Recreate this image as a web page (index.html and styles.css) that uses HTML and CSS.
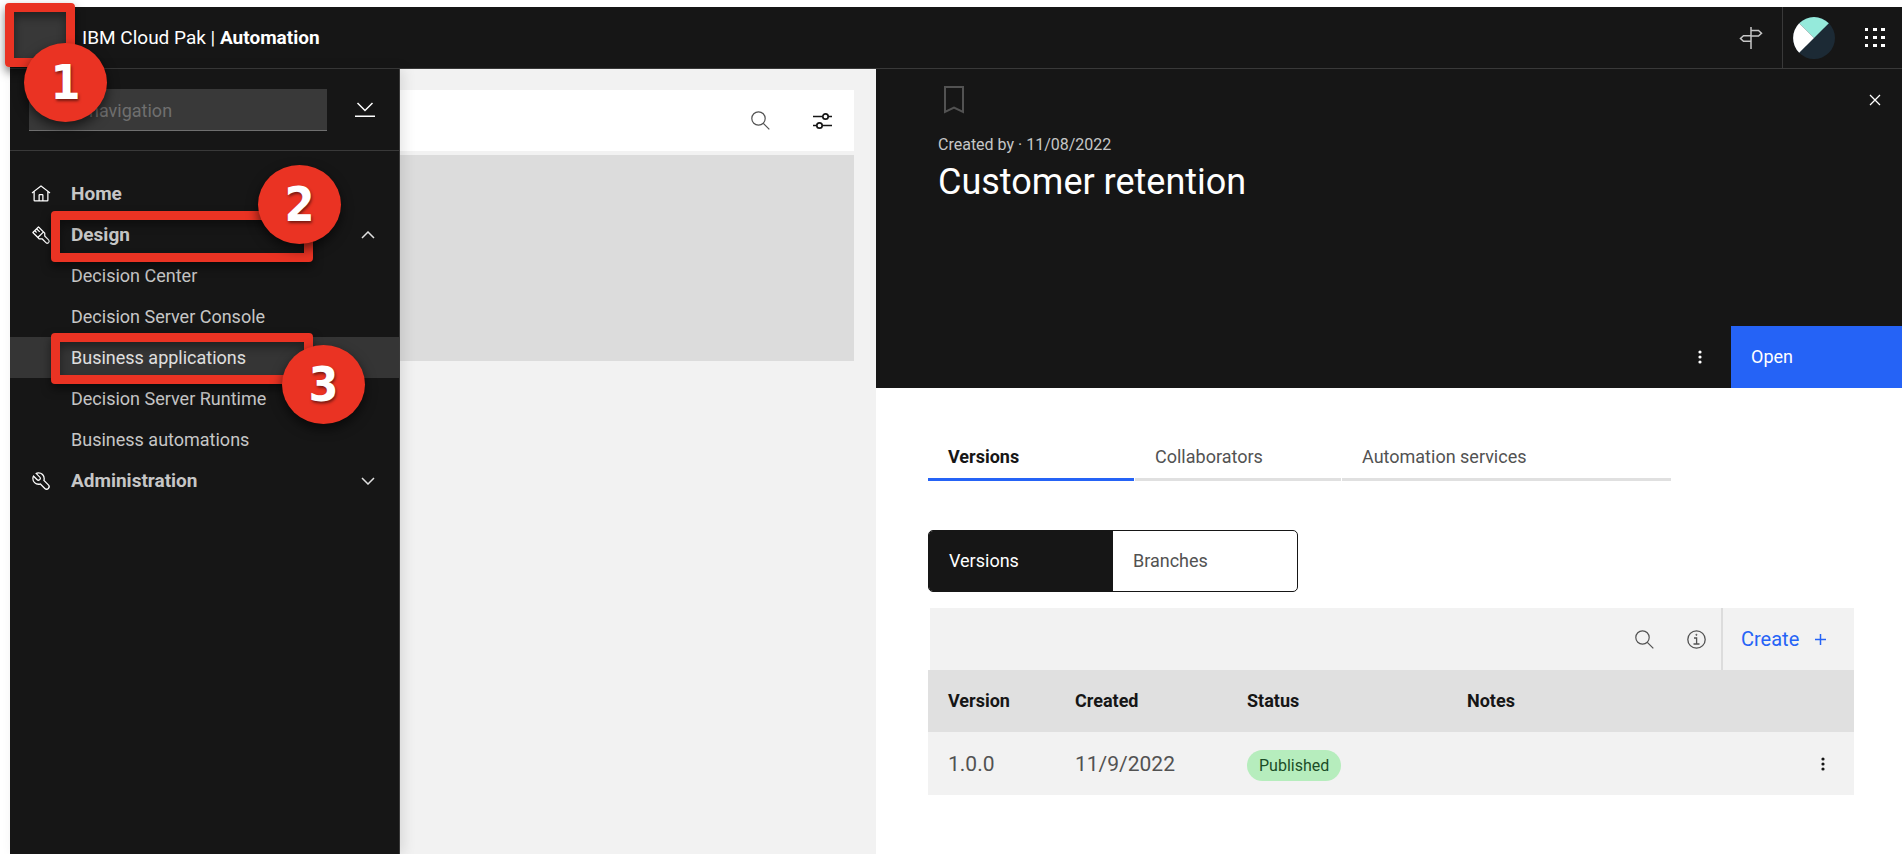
FILE: index.html
```html
<!DOCTYPE html>
<html lang="en">
<head>
<meta charset="utf-8">
<title>IBM Cloud Pak | Automation</title>
<link rel="stylesheet" href="styles.css">
</head>
<body>
<div class="page">
  <header class="topbar">
    <button class="menu-button" aria-label="Menu"></button>
    <div class="brand">IBM Cloud Pak | <strong>Automation</strong></div>
    <div class="topbar-tools">
      <button class="icon-button tool-guide" aria-label="Guide">
        <svg width="24" height="24" viewBox="0 0 24 24" fill="none" stroke="#c6c6c6" stroke-width="1.5"><path d="M12 1v22M12 4.500h7.500l3 2.700-3 2.800H12M12 9.800H4.500l-3 2.700 3 2.700H12"/></svg>
      </button>
      <button class="icon-button tool-avatar" aria-label="Account">
        <svg width="42" height="42" viewBox="0 0 42 42"><circle cx="21" cy="21" r="21" fill="#1c2a35"/><path d="M21 21 6.200 6.200A21 21 0 0 1 35.800 6.200z" fill="#95eadb"/><path d="M21 21 6.200 6.200A21 21 0 0 0 6.200 35.800z" fill="#fff"/></svg>
      </button>
      <button class="icon-button tool-apps" aria-label="Switcher">
        <svg width="20" height="20" viewBox="0 0 20 20" fill="#fff"><path d="M0 0h3v3H0zM8 0h4v3H8zM16 0h4v3h-4zM0 8h3v3H0zM8 8h4v3H8zM16 8h4v3h-4zM0 16h3v3H0zM8 16h4v3H8zM16 16h4v3h-4z"/></svg>
      </button>
    </div>
  </header>

  <div class="columns">
    <nav class="sidebar" aria-label="Main">
      <div class="nav-search">
        <input class="nav-input" type="text" placeholder="navigation" aria-label="Navigation">
        <button class="icon-button" aria-label="Expand all">
          <svg width="20" height="16" viewBox="0 0 20 16" fill="none" stroke="#fff" stroke-width="1.500"><path d="M2.500 1l7.500 7.500L17.500 1M0 14.200h20"/></svg>
        </button>
      </div>
      <ul class="nav-list">
        <li><a class="nav-item nav-group" href="#">
          <svg class="nav-icon" viewBox="0 0 32 32" fill="#fff"><path d="M16.600 2.200a1 1 0 0 0-1.200 0L1 13.400 2.200 15 4 13.600V26a2 2 0 0 0 2 2h20a2 2 0 0 0 2-2V13.600L29.800 15 31 13.400zM18 26h-4v-8h4zm2 0v-8a2 2 0 0 0-2-2h-4a2 2 0 0 0-2 2v8H6V12.100L16 4.300l10 7.800V26z"/></svg>
          <span>Home</span></a></li>
        <li><a class="nav-item nav-group" href="#">
          <svg class="nav-icon" viewBox="0 0 32 32" fill="#fff"><path d="M28.830 23.170 23 17.330V13a1 1 0 0 0-.29-.71l-10-10a1 1 0 0 0-1.420 0l-9 9a1 1 0 0 0 0 1.420l10 10A1 1 0 0 0 13 23h4.340l5.830 5.840a4 4 0 0 0 5.660-5.660zM6 10.410l2.290 2.300 1.420-1.420L7.410 9 9 7.410l4.290 4.300 1.420-1.420L10.410 6 12 4.410 18.590 11 11 18.590 4.410 12zM27.410 27.410a2 2 0 0 1-2.820 0l-6.130-6.120a1 1 0 0 0-.7-.29h-4.350l-1-1L20 12.410l1 1v4.340a1 1 0 0 0 .29.7l6.120 6.130a2 2 0 0 1 0 2.830z"/></svg>
          <span>Design</span>
          <svg class="chevron" viewBox="0 0 14 8" fill="none" stroke="#e0e0e0" stroke-width="1.500"><path d="M1 7l6-6 6 6"/></svg></a></li>
        <li><a class="nav-item" href="#">Decision Center</a></li>
        <li><a class="nav-item" href="#">Decision Server Console</a></li>
        <li><a class="nav-item nav-current" href="#" aria-current="page">Business applications</a></li>
        <li><a class="nav-item" href="#">Decision Server Runtime</a></li>
        <li><a class="nav-item" href="#">Business automations</a></li>
        <li><a class="nav-item nav-group" href="#">
          <svg class="nav-icon" viewBox="0 0 32 32" fill="#fff"><path d="M12.100 2a9.800 9.800 0 0 0-5.400 1.600l6.400 6.400a2.100 2.100 0 0 1 .2 3 2.100 2.100 0 0 1-3-.2L3.700 6.400A9.840 9.840 0 0 0 2 12.100a10.140 10.140 0 0 0 10.100 10.100 10.900 10.900 0 0 0 2.600-.3l6.700 6.700a5 5 0 0 0 7.100-7.100l-6.700-6.700a10.900 10.900 0 0 0 .3-2.600A10 10 0 0 0 12.100 2zm8 10.100a7.610 7.610 0 0 1-.3 2.100l-.3 1.100.8.8 6.700 6.700a2.880 2.880 0 0 1 .9 2.100A2.720 2.720 0 0 1 27 27a2.900 2.900 0 0 1-4.200 0l-6.700-6.700-.8-.8-1.100.3a7.610 7.610 0 0 1-2.100.3 8.270 8.270 0 0 1-5.700-2.300A7.630 7.630 0 0 1 4 12.100a8.330 8.330 0 0 1 .3-2.200l4.400 4.400a4.140 4.140 0 0 0 5.900.2 4.140 4.140 0 0 0-.2-5.900L10 4.200a6.450 6.450 0 0 1 2-.3 8.270 8.270 0 0 1 5.700 2.300 8.490 8.490 0 0 1 2.400 5.900z"/></svg>
          <span>Administration</span>
          <svg class="chevron" viewBox="0 0 14 8" fill="none" stroke="#e0e0e0" stroke-width="1.500"><path d="M1 1l6 6 6-6"/></svg></a></li>
      </ul>
    </nav>

    <section class="list-pane" aria-label="Applications">
      <div class="list-toolbar">
        <button class="icon-button" aria-label="Search">
          <svg width="19" height="19" viewBox="0 0 19 19" fill="none" stroke="#525252" stroke-width="1.200"><circle cx="7.500" cy="7.500" r="6.700"/><path d="M12.300 12.300l6 6"/></svg>
        </button>
        <button class="icon-button" aria-label="Filter">
          <svg width="19" height="18" viewBox="0 0 19 18" fill="none" stroke="#161616" stroke-width="1.700"><path d="M0 4.500h9.500M15.500 4.500H19M0 13.500h3.500M9.500 13.500H19"/><circle cx="12.500" cy="4.500" r="2.700"/><circle cx="6.500" cy="13.500" r="2.700"/></svg>
        </button>
      </div>
      <div class="list-card"></div>
    </section>

    <main class="detail">
      <div class="hero">
        <button class="icon-button hero-close" aria-label="Close">
          <svg width="12" height="12" viewBox="0 0 12 12" fill="none" stroke="#fff" stroke-width="1.300"><path d="M1 1l10 10M11 1L1 11"/></svg>
        </button>
        <svg class="bookmark" width="20" height="28" viewBox="0 0 20 28" fill="none" stroke="#525252" stroke-width="2"><path d="M1 1h18v25l-9-4.500L1 26z"/></svg>
        <p class="hero-meta">Created by · 11/08/2022</p>
        <h1 class="hero-title">Customer retention</h1>
        <div class="hero-actions">
          <button class="icon-button hero-more" aria-label="More options">
            <svg width="4" height="14" viewBox="0 0 4 14" fill="#fff"><circle cx="2" cy="2" r="1.600"/><circle cx="2" cy="7" r="1.600"/><circle cx="2" cy="12" r="1.600"/></svg>
          </button>
          <button class="open-button">Open</button>
        </div>
      </div>

      <div class="detail-body">
        <div class="tabs" role="tablist">
          <button class="tab tab-active" role="tab" aria-selected="true">Versions</button>
          <button class="tab" role="tab" aria-selected="false">Collaborators</button>
          <button class="tab tab-wide" role="tab" aria-selected="false">Automation services</button>
        </div>
        <div class="switcher">
          <button class="switch switch-on">Versions</button>
          <button class="switch">Branches</button>
        </div>
        <div class="table-toolbar">
          <button class="icon-button" aria-label="Search">
            <svg width="19" height="19" viewBox="0 0 19 19" fill="none" stroke="#525252" stroke-width="1.200"><circle cx="7.500" cy="7.500" r="6.700"/><path d="M12.300 12.300l6 6"/></svg>
          </button>
          <button class="icon-button" aria-label="Information">
            <svg width="19" height="19" viewBox="0 0 19 19" fill="none" stroke="#525252" stroke-width="1.300"><circle cx="9.500" cy="9.500" r="8.700"/><path d="M7 8h2.600v5.800M6.500 14h6"/><circle cx="9.400" cy="4.800" r=".6" fill="#525252" stroke-width=".8"/></svg>
          </button>
          <button class="create-button">Create
            <svg width="11" height="11" viewBox="0 0 11 11" stroke="#2563f6" stroke-width="1.500"><path d="M5.500 0v11M0 5.500h11"/></svg>
          </button>
        </div>
        <table class="versions">
          <colgroup><col class="col-version"><col class="col-created"><col class="col-status"><col><col class="col-menu"></colgroup>
          <thead>
            <tr><th>Version</th><th>Created</th><th>Status</th><th>Notes</th><td></td></tr>
          </thead>
          <tbody>
            <tr><td>1.0.0</td><td>11/9/2022</td><td class="cell-status"><span class="tag">Published</span></td><td></td>
              <td><button class="icon-button row-more" aria-label="Row options">
                <svg width="4" height="14" viewBox="0 0 4 14" fill="#161616"><circle cx="2" cy="2" r="1.600"/><circle cx="2" cy="7" r="1.600"/><circle cx="2" cy="12" r="1.600"/></svg>
              </button></td></tr>
          </tbody>
        </table>
      </div>
    </main>
  </div>

  <div class="frame frame-menu"></div>
  <div class="frame frame-design"></div>
  <div class="frame frame-apps"></div>
  <div class="marker marker-1">1</div>
  <div class="marker marker-2">2</div>
  <div class="marker marker-3">3</div>
</div>
</body>
</html>
```
FILE: styles.css
```css
* { box-sizing: border-box; }

body {
  margin: 0;
  background: #fff;
  color: #525252;
  font-family: Roboto, "Liberation Sans", sans-serif;
  font-size: 18px;
  line-height: 24px;
}

button, input { font: inherit; color: inherit; border: 0; border-radius: 0; background: none; padding: 0; text-align: left; }
svg { display: block; flex: none; }
a { color: inherit; text-decoration: none; }
.icon-button { display: flex; align-items: center; justify-content: center; }

.page {
  position: relative;
  display: flex;
  flex-direction: column;
  min-height: 100vh;
  padding: 7px 0 0 10px;
  overflow: hidden;
}

.topbar {
  display: flex;
  height: 62px;
  background: #161616;
  border-bottom: 1px solid #393939;
  color: #fff;
}
.menu-button { width: 62px; margin-right: 10px; background: #383838; height: 52px; }
.brand { align-self: center; font-size: 19px; }
.brand strong { font-weight: 700; }
.topbar-tools { display: flex; margin-left: auto; }
.tool-guide { width: 63px; }
.tool-avatar { width: 62px; border-left: 1px solid #393939; }
.tool-apps { width: 58px; padding-left: 4px; }

.columns {
  flex: 1;
  display: grid;
  grid-template-columns: 390px minmax(0, 476fr) minmax(0, 1026fr);
}

.sidebar {
  background: #161616;
  border-right: 1px solid #393939;
  color: #c6c6c6;
  box-shadow: 4px 0 12px rgba(0, 0, 0, .1);
  z-index: 1;
}
.nav-search {
  display: flex;
  align-items: center;
  justify-content: space-between;
  height: 82px;
  padding: 0 24px 0 19px;
  border-bottom: 1px solid #393939;
}
.nav-input {
  width: 298px;
  height: 42px;
  padding: 3px 0 0 60px;
  background: #393939;
  border-bottom: 1px solid #6f6f6f;
}
.nav-input::placeholder { color: #6f6f6f; opacity: 1; }
.nav-list { list-style: none; margin: 0; padding: 22px 0 0; }
.nav-item { display: flex; align-items: center; height: 41px; padding: 0 24px 0 61px; }
.nav-group { padding-left: 21px; font-size: 19px; font-weight: 700; }
.nav-current { background: #353535; color: #e0e0e0; }
.nav-icon { width: 20px; height: 20px; margin-right: 20px; }
.chevron { width: 14px; height: 8px; margin-left: auto; }

.list-pane { padding: 21px 22px 0 0; background: #f2f2f2; }
.list-toolbar {
  display: flex;
  align-items: center;
  justify-content: flex-end;
  gap: 43px;
  height: 61px;
  padding-right: 22px;
  background: #fff;
}
.list-card { height: 206px; margin-top: 4px; background: #dcdcdc; }

.detail { background: #fff; }
.hero {
  position: relative;
  display: flex;
  flex-direction: column;
  align-items: flex-start;
  height: 319px;
  padding: 17px 0 0 62px;
  background: #161616;
  color: #fff;
}
.hero-close { position: absolute; top: 25px; right: 21px; }
.bookmark { margin-left: 6px; }
.hero-meta { margin: 21px 0 0; font-size: 16px; line-height: 20px; color: #c6c6c6; }
.hero-title { margin: 3px 0 0; font-size: 36px; line-height: 48px; font-weight: 400; }
.hero-actions { display: flex; align-self: stretch; margin-top: auto; }
.hero-more { width: 62px; margin-left: auto; }
.open-button { width: 171px; height: 62px; padding-left: 20px; background: #2563f6; }

.detail-body { padding: 44px 48px 0 52px; }
.tabs { display: flex; gap: 1px; }
.tab { width: 206px; height: 49px; padding: 4px 0 0 20px; border-bottom: 3px solid #e0e0e0; }
.tab-active { border-color: #2563f6; color: #161616; font-weight: 700; }
.tab-wide { width: 329px; }

.switcher {
  display: flex;
  width: 370px;
  height: 62px;
  margin-top: 49px;
  border: 1px solid #161616;
  border-radius: 5px;
  overflow: hidden;
}
.switch { flex: 1; padding-left: 20px; }
.switch-on { background: #161616; color: #fff; }

.table-toolbar {
  display: flex;
  align-items: center;
  justify-content: flex-end;
  gap: 33px;
  height: 62px;
  margin: 16px 0 0 2px;
  background: #f2f2f2;
}
.create-button {
  display: flex;
  align-items: center;
  gap: 16px;
  width: 133px;
  height: 62px;
  margin-left: -18px;
  padding-left: 18px;
  border-left: 2px solid #dcdcdc;
  color: #2563f6;
  font-size: 20px;
}

.versions { width: 100%; table-layout: fixed; border-collapse: collapse; background: #f2f2f2; }
.versions th, .versions td { height: 62px; padding: 0 0 0 20px; text-align: left; }
.versions thead { background: #e0e0e0; color: #161616; }
.versions tbody td { height: 63px; font-size: 21px; }
.versions .cell-status { padding-top: 4px; }
.col-version { width: 127px; }
.col-created { width: 172px; }
.col-status { width: 220px; }
.col-menu { width: 62px; }
.row-more { width: 22px; height: 24px; }
.tag {
  display: inline-block;
  padding: 0 12px;
  border-radius: 16px;
  background: #b6edbd;
  color: #1b4d27;
  font-size: 16px;
  line-height: 31px;
}

.frame {
  position: absolute;
  z-index: 2;
  border: 9px solid #ea3323;
  border-radius: 4px;
  box-shadow: 0 5px 10px rgba(0, 0, 0, .5), inset 0 5px 10px rgba(0, 0, 0, .4);
}
.frame-menu { left: 5px; top: 3px; width: 70px; height: 64px; }
.frame-design { left: 51px; top: 211px; width: 262px; height: 51px; }
.frame-apps { left: 51px; top: 333px; width: 262px; height: 51px; }

.marker {
  position: absolute;
  z-index: 3;
  width: 83px;
  height: 79px;
  border-radius: 50%;
  background: #ea3323;
  box-shadow: 0 5px 12px rgba(0, 0, 0, .6);
  color: #fff;
  font-family: "DejaVu Sans Condensed", "DejaVu Sans", sans-serif;
  font-size: 48px;
  font-weight: 700;
  line-height: 78px;
  text-align: center;
  text-shadow: 1px 2px 3px rgba(0, 0, 0, .5);
}
.marker-1 { left: 24px; top: 43px; }
.marker-2 { left: 258px; top: 165px; }
.marker-3 { left: 282px; top: 345px; }
```
